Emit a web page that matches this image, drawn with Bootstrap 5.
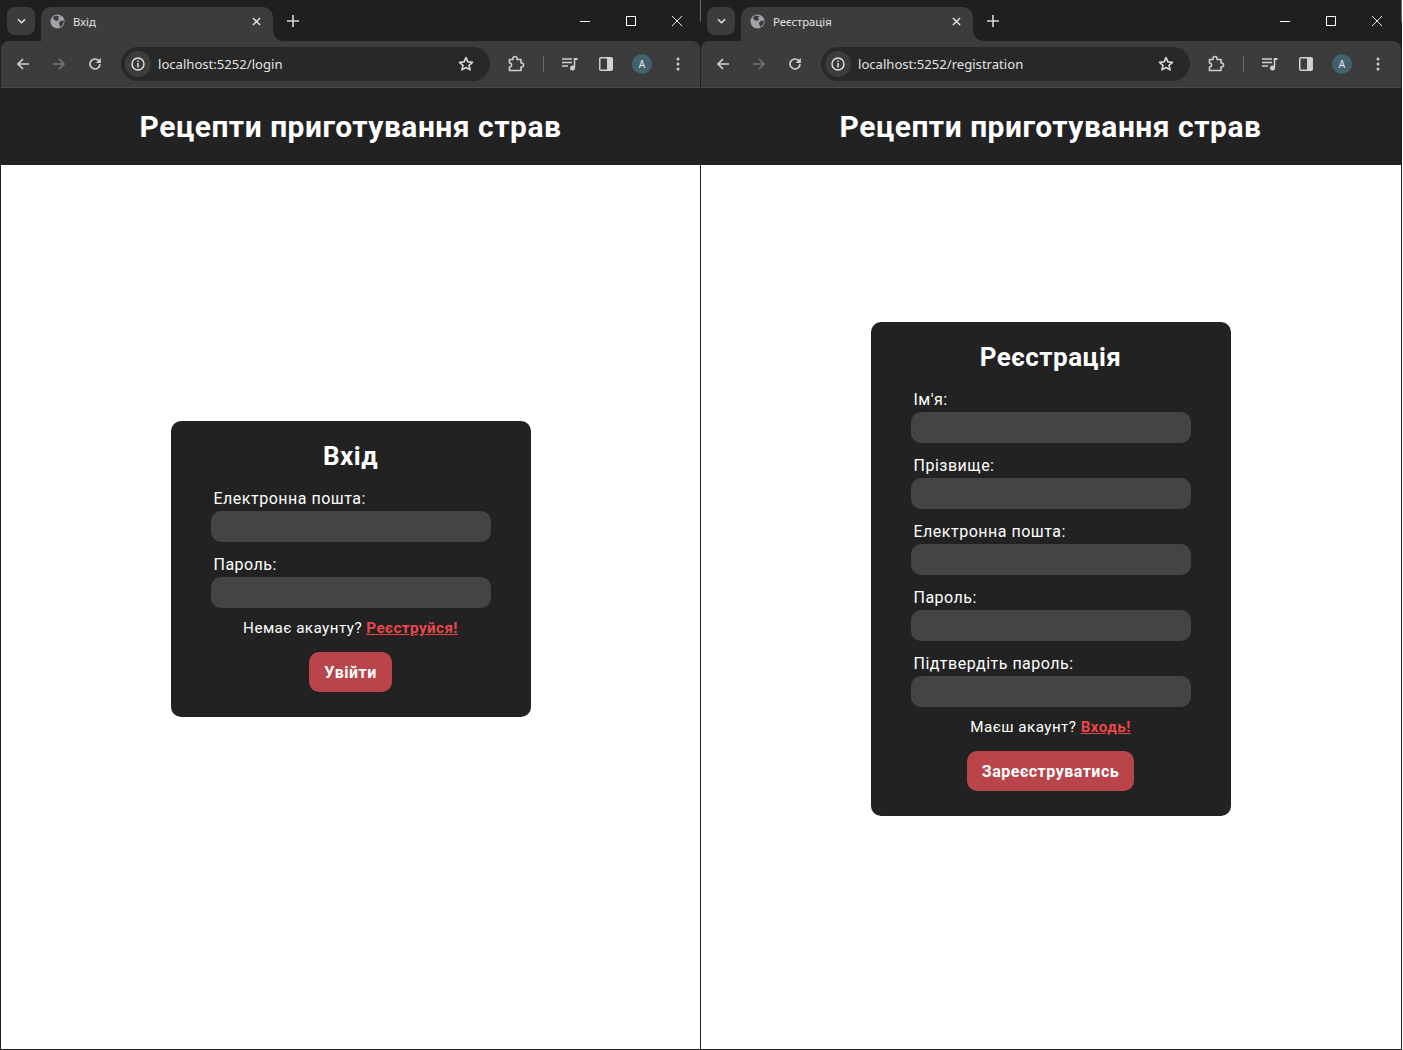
<!DOCTYPE html>
<html lang="uk">
<head>
    <meta charset="UTF-8">
    <meta name="viewport" content="width=device-width, initial-scale=1.0">
    <link href="https://cdn.jsdelivr.net/npm/bootstrap@5.3.2/dist/css/bootstrap.min.css" rel="stylesheet">
    <style>
        html, body { height: 1050px; overflow: hidden; }
        body { background: #fff; font-family: Roboto, sans-serif; width: 1403px; }
        .win { width: 700px; height: 1050px; border-left: 1px solid #222; border-bottom: 1px solid #222; background: #1f1f1f; flex: none; position: relative; }
        .win-last { width: 702px; border-right: 1px solid #222; }
        .win-last::before, .win-last::after { content: ""; position: absolute; top: 0; width: 1px; height: 22px; background: #6a6a6a; }
        .win-last::before { left: -1px; }
        .win-last::after { right: -1px; }
        .tabstrip { height: 41px; background: #1f1f1f; }
        .tab-menu { width: 28px; height: 28px; margin: 7px 0 0 6px; border-radius: 8px; background: #3c3c3c; }
        .chrome-tab { width: 232px; height: 34px; margin: 7px 0 0 6px; padding: 0 12px 6px 9px; background: #3c3c3c; border-radius: 10px 10px 0 0; color: #e3e3e3; font: 11.3px "Noto Sans", sans-serif; position: relative; }
        .chrome-tab::after { content: ""; position: absolute; right: -10px; bottom: 0; width: 10px; height: 10px; background: radial-gradient(circle at 100% 0, transparent 9.5px, #3c3c3c 10px); }
        .tab-title { margin-left: 8px; }
        .plus-btn { margin: 15px 0 0 14px; }
        .win-btns { gap: 36px; padding-right: 18px; margin-left: auto; height: 41px; }
        .win-last .win-btns { padding-right: 19px; }
        .toolbar { height: 47px; background: #3c3c3c; border-radius: 8px 8px 0 0; border-bottom: 1px solid #4a4a4a; padding-left: 15px; color: #d0d0d0; }
        .back-gap { margin-left: 22px; }
        .urlbar { width: 369px; height: 34px; background: #282828; border-radius: 17px; margin-left: 19px; padding: 0 16px 0 4px; color: #e3e3e3; font: 13.1px "Noto Sans", sans-serif; }
        .info-dot { width: 26px; height: 26px; border-radius: 50%; background: #3c3c3c; margin-right: 7px; }
        .ext-icon { margin-left: 17px; }
        .tool-sep { width: 1px; height: 16px; background: #6a6a6a; margin-left: 18px; }
        .media-icon { margin-left: 18px; }
        .side-icon { margin-left: 21px; }
        .avatar { width: 20px; height: 20px; margin-left: 19px; border-radius: 50%; background: #44616f; color: #e6e6e6; font: 10px "Noto Sans", sans-serif; }
        .dots-icon { margin-left: 24px; }
        .site-head { height: 77px; background: #222; color: #fff; font-size: 30px; font-weight: 700; letter-spacing: .5px; }
        .site-main { height: 884px; padding-bottom: 76px; background: #fff; }
        .win-last .site-head, .win-last .site-main { padding-right: 1px; }
        .auth-box { width: 360px; background: #222; color: #fff; border-radius: 10px; padding: 20px 40px 25px; }
        .auth-box h2 { font-size: 26px; font-weight: 700; letter-spacing: .5px; line-height: 30px; margin: 0 0 17px; text-align: center; }
        .auth-box label { display: block; font-size: 16px; letter-spacing: .5px; line-height: 22px; margin: 0 0 1px 3px; }
        .auth-input { display: block; width: 280px; height: 31px; background: #444; border: 0; border-radius: 10px; margin-bottom: 12px; }
        .auth-note { font-size: 15.2px; letter-spacing: .45px; line-height: 16px; margin: 0 0 16px; }
        .auth-note a { color: #e8474c; font-weight: 700; }
        .auth-btn { background: #b94449; color: #fff; font-weight: 700; font-size: 16px; letter-spacing: .5px; border: 0; border-radius: 10px; height: 40px; padding: 1px 15px 0; }
    </style>
    <script src="https://cdn.jsdelivr.net/npm/bootstrap@5.3.2/dist/js/bootstrap.bundle.min.js"></script>
    <title>Вхід</title>
</head>
<body class="d-flex">

<svg width="0" height="0" class="position-absolute">
    <symbol id="i-globe" viewBox="0 0 16 16"><circle cx="8" cy="8" r="7.500" fill="#a0a4a8"/><path d="M6.500 1.500L3 3.500l1.500 3 3 1 2-1.500-1-2 2-1zM15 7l-4 .5-1.500 2 1.500 4.500 3-3z" fill="#3c3c3c"/></symbol>
    <symbol id="i-close" viewBox="0 0 10 10"><path d="M1 1l8 8M9 1l-8 8" stroke="#e3e3e3" stroke-width="1.600"/></symbol>
    <symbol id="i-plus" viewBox="0 0 12 12"><path d="M6 0v12M0 6h12" stroke="#d8d8d8" stroke-width="1.600"/></symbol>
    <symbol id="i-chev" viewBox="0 0 10 6"><path d="M1 1l4 4 4-4" fill="none" stroke="#e3e3e3" stroke-width="1.600"/></symbol>
    <symbol id="i-min" viewBox="0 0 10 10"><path d="M0 5.500h10" stroke="#fff" stroke-width="1"/></symbol>
    <symbol id="i-max" viewBox="0 0 10 10"><rect x=".5" y=".5" width="9" height="9" fill="none" stroke="#fff"/></symbol>
    <symbol id="i-x" viewBox="0 0 10 10"><path d="M0 0l10 10M10 0L0 10" stroke="#fff" stroke-width=".9"/></symbol>
    <symbol id="i-back" viewBox="0 0 14 14"><path d="M13 7H2M7 2L2 7l5 5" fill="none" stroke="currentColor" stroke-width="1.700"/></symbol>
    <symbol id="i-fwd" viewBox="0 0 14 14"><path d="M1 7h11M7 2l5 5-5 5" fill="none" stroke="currentColor" stroke-width="1.700"/></symbol>
    <symbol id="i-reload" viewBox="0 0 14 14"><path d="M12 7a5 5 0 1 1-1.500-3.600L12 5" fill="none" stroke="currentColor" stroke-width="1.600"/><path d="M12.800 1v5h-5z" fill="currentColor"/></symbol>
    <symbol id="i-info" viewBox="0 0 14 14"><circle cx="7" cy="7" r="6" fill="none" stroke="#e3e3e3" stroke-width="1.400"/><path d="M7 6v4.400M7 3.400v1.500" stroke="#e3e3e3" stroke-width="1.500"/></symbol>
    <symbol id="i-star" viewBox="0 0 16 16"><path d="M8 1.600l1.900 4.300 4.600.4-3.500 3 1.100 4.600L8 11.500l-4.100 2.400L5 9.300l-3.500-3 4.600-.4z" fill="none" stroke="#d8d8d8" stroke-width="1.600" stroke-linejoin="round"/></symbol>
    <symbol id="i-ext" viewBox="0 0 18 18"><path d="M2.500 4.500H6V3.500a2 2 0 0 1 4 0v1h4V8h.5a2 2 0 0 1 0 4H14v3.500H2.500V12a2 2 0 0 0 0-4z" fill="none" stroke="#d0d0d0" stroke-width="1.600" stroke-linejoin="round"/></symbol>
    <symbol id="i-media" viewBox="0 0 16 14"><path d="M0 2h10M0 5.500h10M0 9h6" stroke="#d0d0d0" stroke-width="1.500"/><path d="M12.500 1v9" stroke="#d0d0d0" stroke-width="1.500"/><path d="M12 1h3.500v2H12z" fill="#d0d0d0"/><circle cx="10.500" cy="11" r="2.500" fill="#d0d0d0"/></symbol>
    <symbol id="i-side" viewBox="0 0 14 14"><rect width="14" height="14" rx="2" fill="#d0d0d0"/><rect x="1.500" y="1.500" width="6.500" height="11" rx=".5" fill="#3c3c3c"/></symbol>
    <symbol id="i-dots" viewBox="0 0 4 14"><circle cx="2" cy="2" r="1.500" fill="#d0d0d0"/><circle cx="2" cy="7" r="1.500" fill="#d0d0d0"/><circle cx="2" cy="12" r="1.500" fill="#d0d0d0"/></symbol>
</svg>

<div class="win d-flex flex-column">
    <div class="tabstrip d-flex align-items-start">
        <div class="tab-menu d-flex align-items-center justify-content-center"><svg width="9" height="6"><use href="#i-chev"/></svg></div>
        <div class="chrome-tab d-flex align-items-center">
            <svg width="15" height="15"><use href="#i-globe"/></svg>
            <span class="tab-title">Вхід</span>
            <svg class="ms-auto" width="9" height="9"><use href="#i-close"/></svg>
        </div>
        <svg class="plus-btn" width="12" height="12"><use href="#i-plus"/></svg>
        <div class="win-btns d-flex align-items-center">
            <svg width="10" height="10"><use href="#i-min"/></svg>
            <svg width="10" height="10"><use href="#i-max"/></svg>
            <svg width="10" height="10"><use href="#i-x"/></svg>
        </div>
    </div>
    <div class="toolbar d-flex align-items-center">
        <svg width="14" height="14"><use href="#i-back"/></svg>
        <svg class="text-secondary back-gap" width="14" height="14"><use href="#i-fwd"/></svg>
        <svg class="back-gap" width="14" height="14"><use href="#i-reload"/></svg>
        <div class="urlbar d-flex align-items-center">
            <span class="info-dot d-flex align-items-center justify-content-center"><svg width="14" height="14"><use href="#i-info"/></svg></span>
            localhost:5252/login
            <svg class="ms-auto" width="16" height="16"><use href="#i-star"/></svg>
        </div>
        <svg class="ext-icon" width="18" height="18"><use href="#i-ext"/></svg>
        <span class="tool-sep"></span>
        <svg class="media-icon" width="16" height="14"><use href="#i-media"/></svg>
        <svg class="side-icon" width="14" height="14"><use href="#i-side"/></svg>
        <span class="avatar d-flex align-items-center justify-content-center">A</span>
        <svg class="dots-icon" width="4" height="14"><use href="#i-dots"/></svg>
    </div>
    <header class="site-head d-flex align-items-center justify-content-center">Рецепти приготування страв</header>
    <main class="site-main d-flex align-items-center justify-content-center">
        <form class="auth-box">
            <h2>Вхід</h2>
            <label>Електронна пошта:</label>
            <input class="auth-input" type="email">
            <label>Пароль:</label>
            <input class="auth-input" type="password">
            <p class="auth-note text-center">Немає акаунту? <a href="#">Реєструйся!</a></p>
            <div class="text-center"><button class="auth-btn" type="button">Увійти</button></div>
        </form>
    </main>
</div>

<div class="win win-last d-flex flex-column">
    <div class="tabstrip d-flex align-items-start">
        <div class="tab-menu d-flex align-items-center justify-content-center"><svg width="9" height="6"><use href="#i-chev"/></svg></div>
        <div class="chrome-tab d-flex align-items-center">
            <svg width="15" height="15"><use href="#i-globe"/></svg>
            <span class="tab-title">Реєстрація</span>
            <svg class="ms-auto" width="9" height="9"><use href="#i-close"/></svg>
        </div>
        <svg class="plus-btn" width="12" height="12"><use href="#i-plus"/></svg>
        <div class="win-btns d-flex align-items-center">
            <svg width="10" height="10"><use href="#i-min"/></svg>
            <svg width="10" height="10"><use href="#i-max"/></svg>
            <svg width="10" height="10"><use href="#i-x"/></svg>
        </div>
    </div>
    <div class="toolbar d-flex align-items-center">
        <svg width="14" height="14"><use href="#i-back"/></svg>
        <svg class="text-secondary back-gap" width="14" height="14"><use href="#i-fwd"/></svg>
        <svg class="back-gap" width="14" height="14"><use href="#i-reload"/></svg>
        <div class="urlbar d-flex align-items-center">
            <span class="info-dot d-flex align-items-center justify-content-center"><svg width="14" height="14"><use href="#i-info"/></svg></span>
            localhost:5252/registration
            <svg class="ms-auto" width="16" height="16"><use href="#i-star"/></svg>
        </div>
        <svg class="ext-icon" width="18" height="18"><use href="#i-ext"/></svg>
        <span class="tool-sep"></span>
        <svg class="media-icon" width="16" height="14"><use href="#i-media"/></svg>
        <svg class="side-icon" width="14" height="14"><use href="#i-side"/></svg>
        <span class="avatar d-flex align-items-center justify-content-center">A</span>
        <svg class="dots-icon" width="4" height="14"><use href="#i-dots"/></svg>
    </div>
    <header class="site-head d-flex align-items-center justify-content-center">Рецепти приготування страв</header>
    <main class="site-main d-flex align-items-center justify-content-center">
        <form class="auth-box">
            <h2>Реєстрація</h2>
            <label>Ім'я:</label>
            <input class="auth-input" type="text">
            <label>Прізвище:</label>
            <input class="auth-input" type="text">
            <label>Електронна пошта:</label>
            <input class="auth-input" type="email">
            <label>Пароль:</label>
            <input class="auth-input" type="password">
            <label>Підтвердіть пароль:</label>
            <input class="auth-input" type="password">
            <p class="auth-note text-center">Маєш акаунт? <a href="#">Входь!</a></p>
            <div class="text-center"><button class="auth-btn" type="button">Зареєструватись</button></div>
        </form>
    </main>
</div>

</body>
</html>
